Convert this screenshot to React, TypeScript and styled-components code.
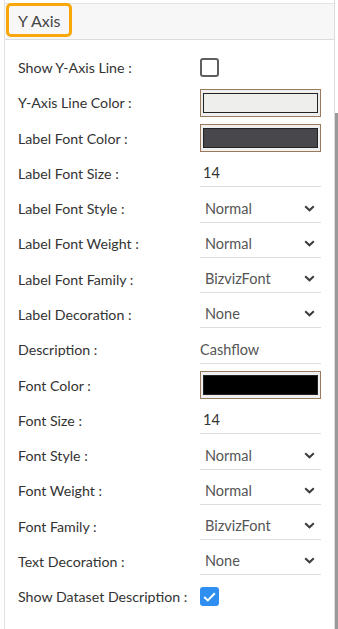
import React from 'react'
import styled, { createGlobalStyle } from 'styled-components'

const GlobalStyle = createGlobalStyle`
  html, body {
    margin: 0;
    padding: 0;
    background: #fff;
  }
  body {
    font-family: Lato, 'Noto Sans', sans-serif;
  }
`

const Frame = styled.div`
  display: flex;
  width: 338px;
  height: 629px;
  overflow: hidden;
`
const Panel = styled.div`
  margin-left: 4px;
  width: 329px;
  border-left: 1px solid #e2e2e2;
  border-right: 1px solid #dcdcdc;
  display: flex;
  flex-direction: column;
`
const Header = styled.div`
  margin-top: 3px;
  height: 37px;
  box-sizing: border-box;
  border-top: 1px solid #e0e3e6;
  border-bottom: 1px solid #dcdcdc;
  background: #f7f7f7;
  display: flex;
  align-items: flex-start;
`
const Title = styled.span`
  margin: -1px 0 0 1px;
  height: 34px;
  box-sizing: border-box;
  border: 3px solid #f7a808;
  border-radius: 5px;
  padding: 0 9px 0 9px;
  display: flex;
  align-items: center;
  font-size: 16px;
  color: #454545;
`
const Body = styled.div`
  padding: 10px 13px 0 13px;
  display: flex;
  flex-direction: column;
`
const Row = styled.div`
  display: grid;
  grid-template-columns: 182px 121px;
  align-items: center;
  height: 35.27px;
`
const Label = styled.span`
  font-size: 14.2px;
  color: #333;
  white-space: nowrap;
`
const Field = styled.div<{ $indent: number }>`
  height: 27px;
  box-sizing: border-box;
  border-bottom: 1px solid #dedede;
  display: flex;
  align-items: center;
  justify-content: space-between;
  padding: 0 6px 1px ${(p) => p.$indent}px;
  margin-top: 1px;
  font-size: 14.5px;
`
const Value = styled.span<{ $dark?: boolean }>`
  color: ${(p) => (p.$dark ? '#333' : '#555')};
`
const Swatch = styled.div`
  height: 28px;
  box-sizing: border-box;
  border: 1px solid #9b7a5c;
  background: #efefef;
  padding: 3px 2px;
  display: flex;
`
const SwatchFill = styled.div<{ $color: string }>`
  flex: 1;
  border: 1px solid #222;
  background: ${(p) => p.$color};
`
const Check = styled.span<{ $on?: boolean }>`
  width: 19px;
  height: 19px;
  box-sizing: border-box;
  border-radius: 3px;
  border: ${(p) => (p.$on ? 'none' : '2px solid #5f5f5f')};
  background: ${(p) => (p.$on ? '#2f8ff0' : '#fff')};
  display: flex;
  align-items: center;
  justify-content: center;
`
const Scrollbar = styled.div`
  width: 3px;
  display: flex;
  flex-direction: column;
  padding-top: 113px;
`
const Thumb = styled.div`
  flex: 1;
  background: #9a9a9a;
`

const Chevron = () => (
  <svg width="11" height="7" viewBox="0 0 11 7">
    <path d="M1.2 1.2 L5.5 5.3 L9.8 1.2" fill="none" stroke="#3c3c3c" strokeWidth="2" />
  </svg>
)

const Tick = () => (
  <svg width="13" height="10" viewBox="0 0 13 10">
    <path d="M1.2 5 L4.8 8.4 L11.8 1.2" fill="none" stroke="#fff" strokeWidth="2" />
  </svg>
)

type Item =
  | { label: string; kind: 'check'; on?: boolean }
  | { label: string; kind: 'color'; color: string }
  | { label: string; kind: 'text'; value: string; indent: number; dark?: boolean }
  | { label: string; kind: 'select'; value: string }

const items: Item[] = [
  { label: 'Show Y-Axis Line :', kind: 'check' },
  { label: 'Y-Axis Line Color :', kind: 'color', color: '#eeefed' },
  { label: 'Label Font Color :', kind: 'color', color: '#48484c' },
  { label: 'Label Font Size :', kind: 'text', value: '14', indent: 3, dark: true },
  { label: 'Label Font Style :', kind: 'select', value: 'Normal' },
  { label: 'Label Font Weight :', kind: 'select', value: 'Normal' },
  { label: 'Label Font Family :', kind: 'select', value: 'BizvizFont' },
  { label: 'Label Decoration :', kind: 'select', value: 'None' },
  { label: 'Description :', kind: 'text', value: 'Cashflow', indent: 0 },
  { label: 'Font Color :', kind: 'color', color: '#000' },
  { label: 'Font Size :', kind: 'text', value: '14', indent: 3, dark: true },
  { label: 'Font Style :', kind: 'select', value: 'Normal' },
  { label: 'Font Weight :', kind: 'select', value: 'Normal' },
  { label: 'Font Family :', kind: 'select', value: 'BizvizFont' },
  { label: 'Text Decoration :', kind: 'select', value: 'None' },
  { label: 'Show Dataset Description :', kind: 'check', on: true },
]

function renderControl(item: Item) {
  switch (item.kind) {
    case 'check':
      return <Check $on={item.on}>{item.on && <Tick />}</Check>
    case 'color':
      return (
        <Swatch>
          <SwatchFill $color={item.color} />
        </Swatch>
      )
    case 'text':
      return (
        <Field $indent={item.indent}>
          <Value $dark={item.dark}>{item.value}</Value>
        </Field>
      )
    case 'select':
      return (
        <Field $indent={5}>
          <Value>{item.value}</Value>
          <Chevron />
        </Field>
      )
  }
}

export default function App() {
  return (
    <Frame>
      <GlobalStyle />
      <Panel>
        <Header>
          <Title>Y Axis</Title>
        </Header>
        <Body>
          {items.map((item, i) => (
            <Row key={i}>
              <Label>{item.label}</Label>
              {renderControl(item)}
            </Row>
          ))}
        </Body>
      </Panel>
      <Scrollbar>
        <Thumb />
      </Scrollbar>
    </Frame>
  )
}
